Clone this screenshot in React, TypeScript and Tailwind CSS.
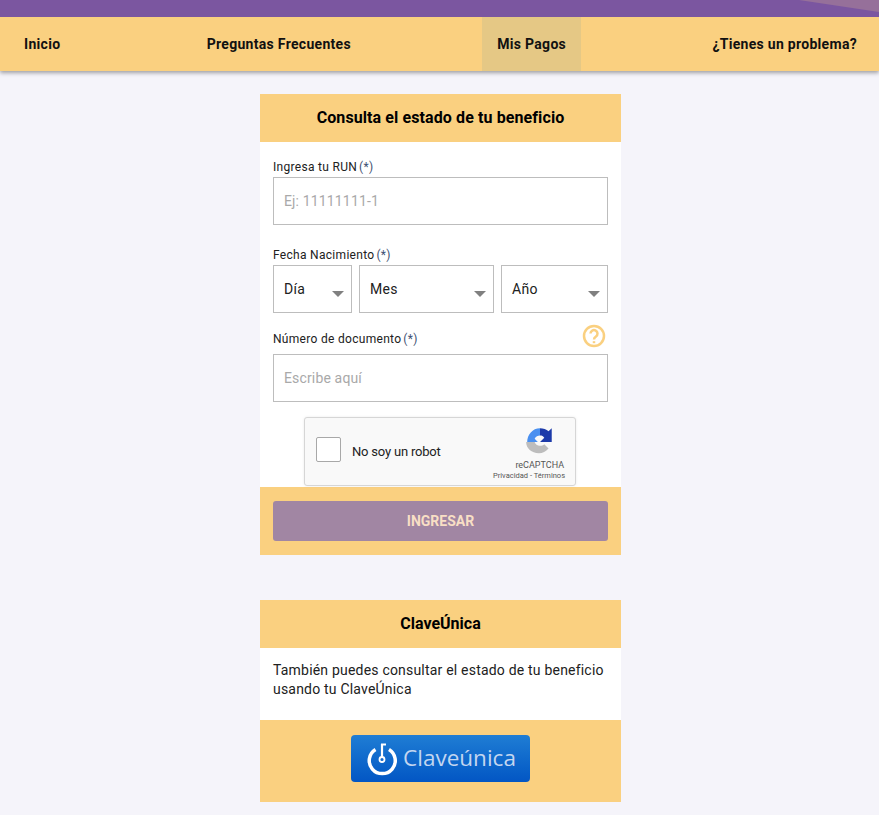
const fieldBox = "h-12 w-full border border-[#bdbdbd] bg-white px-[10px] text-sm tracking-[0.15px] text-[#212121] placeholder:text-[#a9a9a9] outline-none";

function Label({ text }: { text: string }) {
  return (
    <label className="block text-xs leading-4 tracking-[0.3px] text-[#212121]">
      {text}<span className="ml-[2px] text-[#3f5273]">(*)</span>
    </label>
  );
}

function FakeSelect({ label, className }: { label: string; className: string }) {
  return (
    <div className={`relative h-12 border border-[#bdbdbd] bg-white ${className}`}>
      <span className="absolute left-[10px] top-[14px] text-sm leading-[18px] tracking-[0.3px] text-[#212121]">{label}</span>
      <span className="absolute right-[7px] top-[25px] h-0 w-0 border-x-[6px] border-t-[6px] border-x-transparent border-t-[#808080]" />
    </div>
  );
}

function RecaptchaLogo() {
  return (
    <svg width="32" height="32" viewBox="0 0 30 30" className="absolute right-[19px] top-[8px]">
      <path d="M3 15C3 8 8 2 15 2v7c-2 0-4 1-5 3l3 3z" fill="#4a90f0" />
      <path d="M15 2c3 0 6 1 8 3l3-3v13H15l4-4c-1-1.500-2-2-4-2z" fill="#1c3aa9" />
      <path d="M2 15h8c.500 2 2.500 3.500 5 3.500 1.500 0 3-.500 4-1.500l4 4c-2.500 3-5.500 4.500-9 4.500C7 25.500 2 21 2 15z" fill="#bdbdbd" />
    </svg>
  );
}

function Recaptcha() {
  return (
    <div className="relative ml-[31px] h-[69px] w-[272px] rounded-[3px] border border-[#d6d6d6] bg-[#f9f9f9] shadow-[0_0_3px_rgba(0,0,0,0.08)]">
      <div className="absolute left-[11px] top-[19px] h-[25px] w-[25px] rounded-[2px] border border-[#a8a8a8] bg-white" />
      <span className="absolute left-[47px] top-[24px] text-[13px] leading-[20px] tracking-[-0.2px] text-[#222]">No soy un robot</span>
      <RecaptchaLogo />
      <span className="absolute right-[11px] top-[41px] text-[9px] leading-3 text-[#555]">reCAPTCHA</span>
      <span className="absolute right-[10px] top-[52px] text-[7.500px] leading-3 text-[#555]">Privacidad - Términos</span>
    </div>
  );
}

function ClaveUnicaLogo() {
  return (
    <svg width="34" height="34" viewBox="0 0 34 34" fill="none" stroke="white" className="shrink-0">
      <path d="M10.500 7.500a13 13 0 1 0 13.500 0" strokeWidth="3.500" strokeLinecap="butt" />
      <path d="M17 2v13" strokeWidth="2.200" />
      <path d="M16 2.500h5" strokeWidth="2" />
      <circle cx="17" cy="17.500" r="2.500" strokeWidth="1.800" />
    </svg>
  );
}

export default function App() {
  return (
    <div className="min-h-[815px] bg-[#f5f4fa] font-['Roboto',sans-serif]">
      <div className="relative h-[17px] overflow-hidden bg-[#7b56a0]">
        <svg className="absolute right-0 top-0" width="80" height="17" viewBox="0 0 80 17">
          <path d="M0 0L80 12V0z" fill="#96709a" />
        </svg>
      </div>
      <nav className="flex h-[54px] items-stretch justify-between bg-[#fad080] pl-[24px] pr-[22px] text-sm font-bold tracking-[0.3px] text-[#111] shadow-[0_2px_4px_rgba(0,0,0,0.35)]">
        <a className="flex items-center">Inicio</a>
        <a className="ml-[15px] flex items-center">Preguntas Frecuentes</a>
        <a className="flex items-center bg-[#e5c885] px-[15px]">Mis Pagos</a>
        <a className="flex items-center">¿Tienes un problema?</a>
      </nav>

      <main className="ml-[260px] w-[361px] pt-[23px]">
        <section className="bg-white">
          <h2 className="flex h-12 items-center justify-center bg-[#fad080] text-base font-bold tracking-[0.1px] text-black">Consulta el estado de tu beneficio</h2>
          <div className="px-[13px] pt-[17px]">
            <Label text="Ingresa tu RUN" />
            <input className={`${fieldBox} mt-[2px]`} placeholder="Ej: 11111111-1" readOnly />
            <div className="mt-[22px]"><Label text="Fecha Nacimiento" /></div>
            <div className="mt-[2px] flex gap-[7px]">
              <FakeSelect label="Día" className="w-[79px]" />
              <FakeSelect label="Mes" className="w-[135px]" />
              <FakeSelect label="Año" className="w-[107px]" />
            </div>
            <div className="relative mt-[18px]">
              <Label text="Número de documento" />
              <svg width="24" height="24" viewBox="0 0 24 24" fill="none" stroke="#fad080" className="absolute right-[2px] top-[-7px]">
                <circle cx="12" cy="12" r="10" strokeWidth="2.500" />
                <path d="M8.500 9.500a3.500 3.500 0 1 1 5.500 3c-1.500 1-2 1.500-2 3" strokeWidth="2.500" />
                <path d="M12 17.200v2" strokeWidth="2.500" />
              </svg>
            </div>
            <input className={`${fieldBox} mt-[7px]`} placeholder="Escribe aquí" readOnly />
            <div className="pb-[1px] pt-[15px]"><Recaptcha /></div>
          </div>
          <div className="bg-[#fad080] px-[13px] py-[14px]">
            <button className="h-10 w-full rounded-[3px] bg-[#a186a3] text-sm font-bold text-[#f8dfc5]">INGRESAR</button>
          </div>
        </section>

        <section className="mt-[45px] bg-white">
          <h2 className="flex h-12 items-center justify-center bg-[#fad080] text-base font-bold text-black">ClaveÚnica</h2>
          <p className="px-[13px] pb-[21px] pt-[13px] text-sm leading-[19px] tracking-[0.2px] text-[#212121]">
            También puedes consultar el estado de tu beneficio usando tu ClaveÚnica
          </p>
          <div className="flex h-[82px] justify-center bg-[#fad080] pt-[15px]">
            <a className="flex h-[47px] w-[179px] items-center justify-center gap-[4px] rounded-[4px] bg-gradient-to-b from-[#1f7dd4] to-[#0356c4] font-['Open_Sans',sans-serif] text-[22.500px] leading-none text-[#c3d6f0]">
              <ClaveUnicaLogo />
              <span>Claveúnica</span>
            </a>
          </div>
        </section>
      </main>
    </div>
  );
}
